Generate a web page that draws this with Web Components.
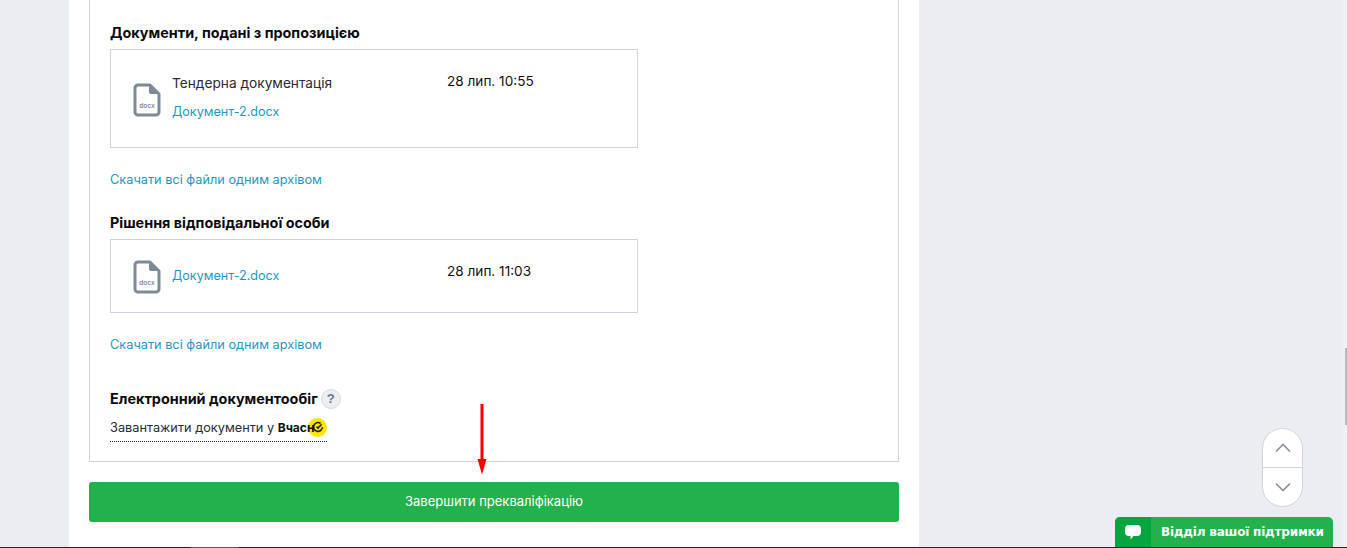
<!DOCTYPE html>
<html lang="uk">
<head>
<meta charset="utf-8">
<title>Прекваліфікація</title>
<style>
  html, body { margin: 0; height: 100%; overflow: hidden; }
  body { background: #eaedf2; font-family: Inter, "Liberation Sans", sans-serif; color: #111; }
</style>
</head>
<body>
<template id="file-icon-tpl">
  <style>
    :host { display: block; width: 28px; height: 34px; flex: none; }
    svg { display: block; }
    text { font: 600 6.5px Inter, "Liberation Sans", sans-serif; fill: #7f8a97; }
  </style>
  <svg width="28" height="34" viewBox="0 0 28 34" fill="none">
    <path d="M5 2h12l9 9v18a3 3 0 0 1-3 3H5a3 3 0 0 1-3-3V5a3 3 0 0 1 3-3z" stroke="#7f8a97" stroke-width="3" stroke-linejoin="round"/>
    <path d="M16 2v7a2 2 0 0 0 2 2h8z" fill="#7f8a97"/>
    <text x="14" y="25" text-anchor="middle">docx</text>
  </svg>
</template>

<template id="doc-file-tpl">
  <style>
    :host { display: flex; box-sizing: border-box; width: 528px; border: 1px solid #cfd3de; padding: var(--pad, 22px 0 0 22px); height: var(--h, 99px); }
    file-icon { margin: var(--icon-m, 11px 11px 0 0); }
    .names { width: 275px; display: flex; flex-direction: column; gap: 10px; padding-top: var(--names-top, 1px); }
    .kind { font-size: 13.7px; line-height: 20px; color: #2b2b33; }
    .kind:empty { display: none; }
    a { color: #1f97c7; text-decoration: none; font-size: 12.6px; line-height: 18px; }
    .when { font-size: 13.6px; line-height: 18px; color: #111; }
  </style>
  <file-icon></file-icon>
  <div class="names">
    <div class="kind"></div>
    <a href="#"></a>
  </div>
  <div class="when"></div>
</template>

<template id="doc-section-tpl">
  <style>
    :host { display: block; }
    h3 { margin: 0 0 6px; font-size: 14.4px; line-height: 20px; font-weight: 700; color: #0c0c10; }
    a { display: block; margin-top: 23px; color: #1f97c7; font-size: 12.75px; line-height: 18px; text-decoration: none; }
  </style>
  <h3></h3>
  <slot></slot>
  <a href="#">Скачати всі файли одним архівом</a>
</template>

<template id="edo-block-tpl">
  <style>
    :host { display: block; }
    .head { display: flex; align-items: center; gap: 3px; height: 22px; }
    h3 { margin: 0; font-size: 14.4px; line-height: 20px; font-weight: 700; color: #0c0c10; }
    .help { box-sizing: border-box; width: 20px; height: 20px; border-radius: 50%; background: #eceef3; border: 1px solid #d5d8e0; color: #6f7783; font: 700 13px/18px "Liberation Sans", sans-serif; text-align: center; }
    .link { display: inline-flex; align-items: center; margin-top: 5px; height: 24px; padding-bottom: 2px; border-bottom: 1px dotted #222; font-size: 12.75px; color: #2b2b33; white-space: pre; }
    b { position: relative; z-index: 1; font-size: 12px; font-weight: 700; color: #111; }
    .logo { width: 19px; height: 19px; border-radius: 50%; background: #ffe600; display: flex; align-items: center; justify-content: center; margin-left: -6px; }
  </style>
  <div class="head"><h3>Електронний документообіг</h3><span class="help">?</span></div>
  <div class="link"><span>Завантажити документи у </span><b>Вчасн</b><span class="logo">
      <svg width="12" height="12" viewBox="0 0 12 12" fill="none" stroke="#222" stroke-width="1.6"><path d="M10.400 6.200A4.400 4.400 0 1 1 8.600 2.400"/><path d="M4.600 5.600l1.400 1.400L9.600 3.400"/></svg>
    </span></div>
</template>

<template id="scroll-pill-tpl">
  <style>
    :host { position: absolute; left: 1262px; top: 428px; width: 41px; height: 79px; box-sizing: border-box; border: 1px solid #cfd3de; border-radius: 21px; background: #fff; display: flex; flex-direction: column; }
    div { flex: 1; display: flex; align-items: center; justify-content: center; }
    div + div { border-top: 1px solid #cfd3de; }
  </style>
  <div><svg width="16" height="10" viewBox="0 0 16 10" fill="none" stroke="#8a93a2" stroke-width="1.7"><path d="M1 8.500l7-7 7 7"/></svg></div>
  <div><svg width="16" height="10" viewBox="0 0 16 10" fill="none" stroke="#8a93a2" stroke-width="1.7"><path d="M1 1.500l7 7 7-7"/></svg></div>
</template>

<template id="support-tab-tpl">
  <style>
    :host { position: absolute; left: 1115px; top: 517px; width: 218px; height: 30px; display: flex; border-radius: 5px 5px 0 0; overflow: hidden; background: #23b14d; color: #fff; font: 700 12px "DejaVu Sans", sans-serif; }
    .ico { width: 36px; background: #05a640; display: flex; align-items: center; justify-content: center; }
    .txt { flex: 1; display: flex; align-items: center; padding-left: 10px; white-space: nowrap; letter-spacing: -.2px; }
  </style>
  <div class="ico"><svg width="18" height="18" viewBox="0 0 18 18"><path d="M5 2h8a4 4 0 0 1 4 4v3a4 4 0 0 1-4 4H9.500l-3 3.500V13H5a4 4 0 0 1-4-4V6a4 4 0 0 1 4-4z" fill="#fff"/></svg></div>
  <div class="txt">Відділ вашої підтримки</div>
</template>

<template id="red-arrow-tpl">
  <style>
    :host { position: absolute; left: 476.500px; top: 404px; width: 10px; height: 71px; }
    svg { display: block; }
  </style>
  <svg width="10" height="71" viewBox="0 0 10 71"><path d="M3.500 0h3v55H9.500L5 70.500 .5 55h3z" fill="#f00"/></svg>
</template>

<template id="page-scrollbar-tpl">
  <style>
    :host { position: absolute; right: 0; top: 0; width: 4px; height: 547px; background: #f1f1f1; }
    div { position: absolute; right: 0; top: 348px; width: 2px; height: 77px; background: #bdbdbd; }
  </style>
  <div></div>
</template>

<template id="prequal-page-tpl">
  <style>
    :host { display: block; box-sizing: border-box; width: 850px; height: 547px; margin-left: 69px; padding: 0 20px; background: #fff; }
    .panel { box-sizing: border-box; height: 462px; border: 1px solid #cfd3de; border-top: 0; padding: 23px 20px 0; }
    .second { margin-top: 24px; }
    .third { margin-top: 34px; }
    button { display: block; width: 100%; height: 40px; margin-top: 20px; padding: 0 0 3px; border: 0; border-radius: 3px; background: #23b14d; color: #fff; font: 400 13px Inter, "Liberation Sans", sans-serif; }
  </style>
  <div class="panel">
    <doc-section heading="Документи, подані з пропозицією">
      <doc-file kind="Тендерна документація" name="Документ-2.docx" when="28 лип. 10:55"></doc-file>
    </doc-section>
    <doc-section class="second" heading="Рішення відповідальної особи">
      <doc-file name="Документ-2.docx" when="28 лип. 11:03" style="--h:74px;--names-top:5px;--icon-m:-2px 11px 0 0"></doc-file>
    </doc-section>
    <edo-block class="third"></edo-block>
  </div>
  <button>Завершити прекваліфікацію</button>
</template>

<prequal-page></prequal-page>
<red-arrow></red-arrow>
<scroll-pill></scroll-pill>
<support-tab></support-tab>
<page-scrollbar></page-scrollbar>
<div style="position:absolute;left:0;right:0;top:547px;height:1px;background:linear-gradient(90deg,#2a2222 191px,#5a5a5a 191px,#5a5a5a 239px,#2a2222 239px)"></div>

<script>
  function shadowFrom(el, id) {
    el.attachShadow({ mode: 'open' }).appendChild(document.getElementById(id).content.cloneNode(true));
    return el.shadowRoot;
  }

  class FileIcon extends HTMLElement {
    constructor() { super(); shadowFrom(this, 'file-icon-tpl'); }
  }

  class DocFile extends HTMLElement {
    constructor() { super(); shadowFrom(this, 'doc-file-tpl'); }
    connectedCallback() {
      const root = this.shadowRoot;
      root.querySelector('.kind').textContent = this.getAttribute('kind') || '';
      root.querySelector('a').textContent = this.getAttribute('name');
      root.querySelector('.when').textContent = this.getAttribute('when');
    }
  }

  class DocSection extends HTMLElement {
    constructor() { super(); shadowFrom(this, 'doc-section-tpl'); }
    connectedCallback() {
      this.shadowRoot.querySelector('h3').textContent = this.getAttribute('heading');
    }
  }

  // the rest are plain template holders
  const plain = {
    'edo-block': 'edo-block-tpl',
    'scroll-pill': 'scroll-pill-tpl',
    'support-tab': 'support-tab-tpl',
    'red-arrow': 'red-arrow-tpl',
    'page-scrollbar': 'page-scrollbar-tpl',
    'prequal-page': 'prequal-page-tpl'
  };

  customElements.define('file-icon', FileIcon);
  customElements.define('doc-file', DocFile);
  customElements.define('doc-section', DocSection);
  for (const tag in plain) {
    customElements.define(tag, class extends HTMLElement {
      constructor() { super(); shadowFrom(this, plain[tag]); }
    });
  }
</script>
</body>
</html>
